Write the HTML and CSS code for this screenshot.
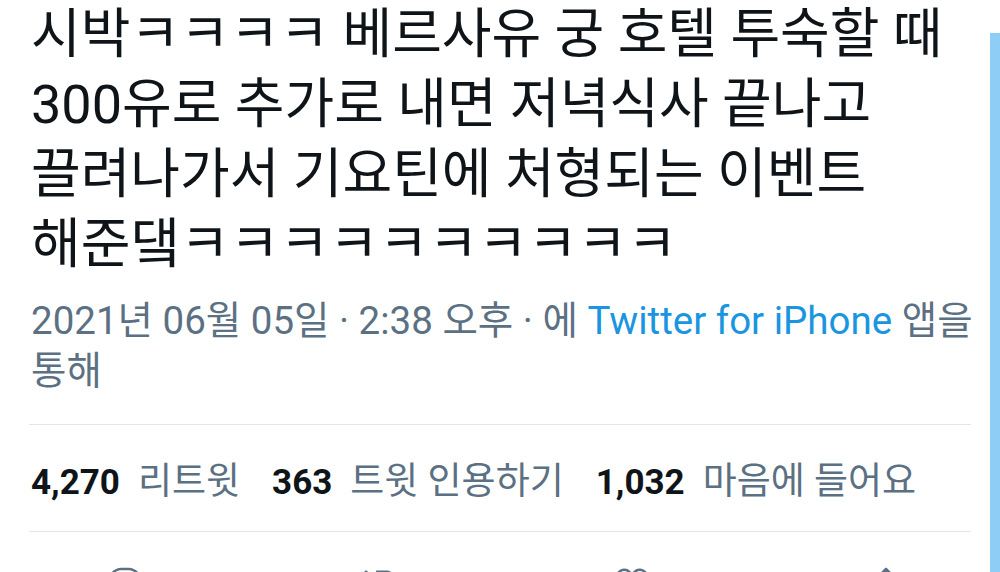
FILE: index.html
```html
<!DOCTYPE html>
<html lang="ko">
<head>
    <meta charset="UTF-8">
    <meta name="viewport" content="width=device-width, initial-scale=1.0">
    <title>트윗</title>
    <link rel="stylesheet" href="styles.css">
</head>
<body>
    <div class="tweet">
        <p class="tweet-text">시박ㅋㅋㅋㅋ 베르사유 궁 호텔 투숙할 때<br>300유로 추가로 내면 저녁식사 끝나고<br>끌려나가서 기요틴에 처형되는 이벤트<br>해준댘ㅋㅋㅋㅋㅋㅋㅋㅋㅋㅋ</p>

        <div class="meta">
            2021년 06월 05일 · 2:38 오후 · 에 <a href="#" class="source">Twitter for iPhone</a> 앱을<br>통해
        </div>

        <div class="stats">
            <span class="stat"><b>4,270</b>리트윗</span>
            <span class="stat"><b>363</b>트윗 인용하기</span>
            <span class="stat"><b>1,032</b>마음에 들어요</span>
        </div>

        <div class="actions">
            <svg class="icon" viewBox="0 0 24 24"><path d="M14.046 2.242l-4.148-.01h-.002c-4.374 0-7.8 3.427-7.8 7.802 0 4.098 3.186 7.206 7.465 7.37v3.828c0 .108.044.286.12.403.142.225.384.347.632.347.138 0 .277-.038.402-.118.264-.168 6.473-4.14 8.088-5.506 1.902-1.61 3.04-3.97 3.043-6.312v-.017c-.006-4.367-3.43-7.787-7.8-7.788zm3.787 12.972c-1.134.96-4.862 3.405-6.772 4.643V16.67c0-.414-.335-.75-.75-.75h-.396c-3.66 0-6.318-2.476-6.318-5.886 0-3.534 2.768-6.302 6.3-6.302l4.147.01h.002c3.532 0 6.3 2.766 6.302 6.296-.003 1.91-.942 3.844-2.514 5.176z"/></svg>
            <svg class="icon" viewBox="0 0 24 24"><path d="M23.77 15.67c-.292-.293-.767-.293-1.06 0l-2.22 2.22V7.650c0-2.068-1.683-3.75-3.75-3.75h-5.85c-.414 0-.75.336-.75.75s.336.75.75.75h5.85c1.24 0 2.25 1.01 2.25 2.25v10.24l-2.22-2.22c-.293-.293-.768-.293-1.06 0s-.294.768 0 1.06l3.5 3.5c.145.147.337.22.53.22s.383-.072.53-.22l3.5-3.5c.294-.292.294-.767 0-1.06zm-10.66 3.28H7.26c-1.24 0-2.25-1.01-2.25-2.25V6.46l2.22 2.22c.148.147.34.22.532.22s.384-.073.53-.22c.293-.293.293-.768 0-1.06l-3.5-3.5c-.293-.294-.768-.294-1.06 0l-3.5 3.5c-.294.292-.294.767 0 1.06s.767.293 1.06 0l2.22-2.220V16.7c0 2.068 1.683 3.75 3.75 3.75h5.850c.414 0 .75-.336.75-.75s-.337-.75-.75-.75z"/></svg>
            <svg class="icon" viewBox="0 0 24 24"><path d="M12 21.638h-.014C9.403 21.59 1.95 14.856 1.95 8.478c0-3.064 2.525-5.754 5.403-5.754 2.29 0 3.83 1.58 4.646 2.73.814-1.148 2.354-2.73 4.645-2.73 2.880 0 5.404 2.69 5.404 5.755 0 6.376-7.454 13.11-10.037 13.157H12zM7.354 4.225c-2.080 0-3.903 1.988-3.903 4.255 0 5.740 7.034 11.596 8.550 11.658 1.518-.062 8.550-5.917 8.550-11.658 0-2.267-1.823-4.255-3.903-4.255-2.528 0-3.940 2.936-3.952 2.965-.23.562-1.156.562-1.387 0-.014-.03-1.425-2.965-3.954-2.965z"/></svg>
            <svg class="icon" viewBox="0 0 24 24"><path d="M17.53 7.47l-5-5c-.293-.293-.768-.293-1.060 0l-5 5c-.294.293-.294.768 0 1.060s.767.294 1.060 0l3.720-3.720V15c0 .414.336.75.75.75s.75-.336.75-.75V4.810l3.720 3.720c.146.147.338.22.53.22s.384-.072.53-.22c.293-.293.293-.767 0-1.060z"/><path d="M19.708 21.944H4.292C3.028 21.944 2 20.916 2 19.652V14c0-.414.336-.75.75-.75s.75.336.75.75v5.652c0 .437.355.792.792.792h15.416c.437 0 .792-.355.792-.792V14c0-.414.336-.75.75-.75s.75.336.75.75v5.652c0 1.264-1.028 2.292-2.292 2.292z"/></svg>
        </div>
    </div>

    <div class="scrollbar"></div>
</body>
</html>
```

FILE: styles.css
```css
* {
    margin: 0;
    padding: 0;
    box-sizing: border-box;
}

body {
    background-color: #fff;
    font-family: Roboto, "Noto Sans CJK KR", sans-serif;
    color: #14171a;
}

.tweet {
    height: 100vh;
    overflow: hidden;
    padding: 0 29px;
}

.tweet-text {
    font-size: 54px;
    line-height: 70px;
    padding-left: 2px;
    color: #0f1419;
}

.meta {
    margin-top: 16px;
    padding-left: 2px;
    font-size: 38.5px;
    line-height: 50px;
    white-space: nowrap;
    color: #5b7083;
    padding-bottom: 28px;
    border-bottom: 1px solid #e1e6ea;
}

.source {
    color: #1b95e0;
    text-decoration: none;
}

.stats {
    display: flex;
    gap: 32px;
    align-items: center;
    height: 107px;
    padding-left: 2px;
    font-size: 37px;
    color: #5b7083;
    border-bottom: 1px solid #e1e6ea;
}

.stat b {
    font-size: 35px;
    color: #0f1419;
    font-weight: 700;
    margin-right: 18px;
}

.actions {
    display: flex;
    justify-content: space-between;
    padding: 32px 65px 0 76px;
}

.icon {
    width: 40px;
    height: 40px;
    fill: #5b7083;
}

.scrollbar {
    position: absolute;
    top: 33px;
    right: 0;
    bottom: 0;
    width: 10px;
    background-color: #8ecdf6;
}
```
